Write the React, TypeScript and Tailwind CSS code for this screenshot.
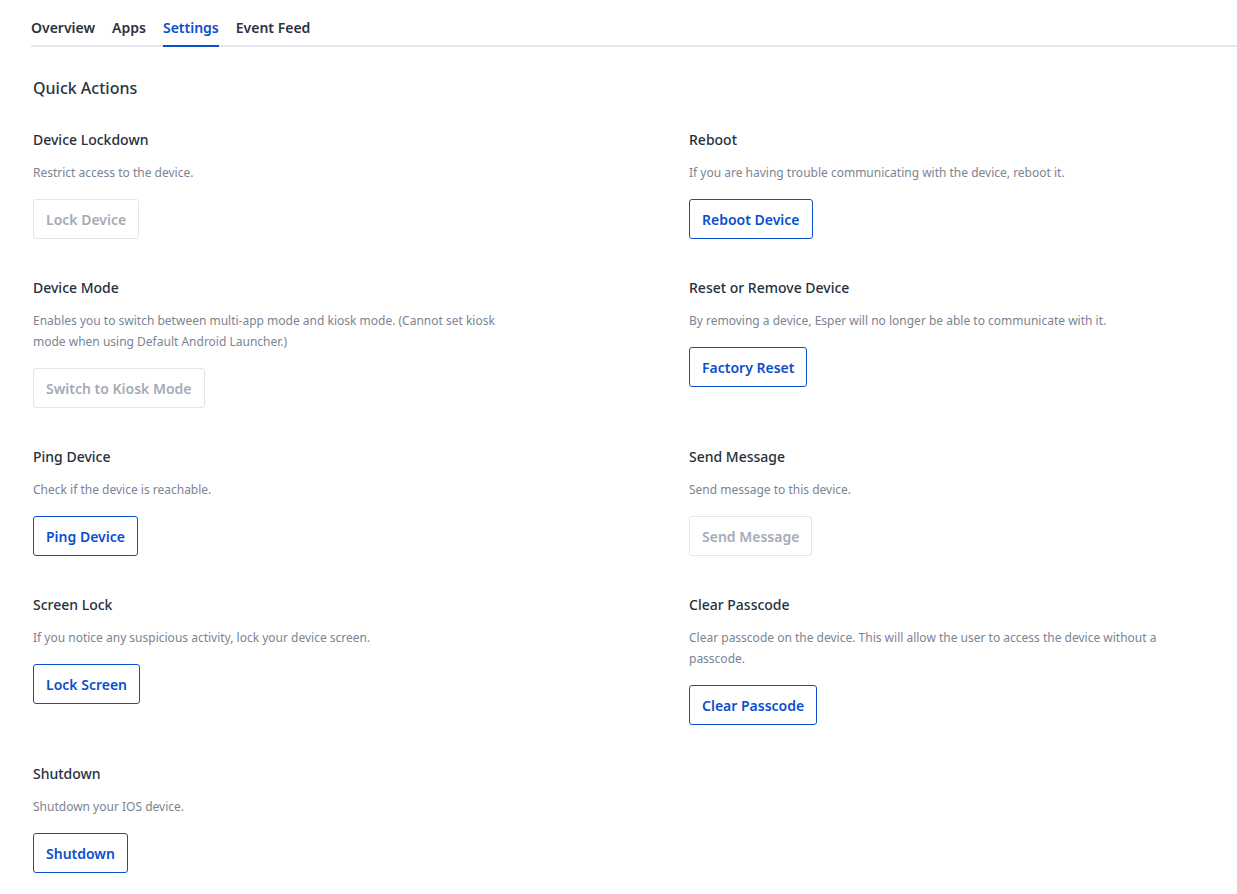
const actions = [
  { title: "Device Lockdown", desc: "Restrict access to the device.", btn: "Lock Device", disabled: true },
  { title: "Reboot", desc: "If you are having trouble communicating with the device, reboot it.", btn: "Reboot Device" },
  { title: "Device Mode", desc: "Enables you to switch between multi-app mode and kiosk mode. (Cannot set kiosk mode when using Default Android Launcher.)", btn: "Switch to Kiosk Mode", disabled: true },
  { title: "Reset or Remove Device", desc: "By removing a device, Esper will no longer be able to communicate with it.", btn: "Factory Reset" },
  { title: "Ping Device", desc: "Check if the device is reachable.", btn: "Ping Device" },
  { title: "Send Message", desc: "Send message to this device.", btn: "Send Message", disabled: true },
  { title: "Screen Lock", desc: "If you notice any suspicious activity, lock your device screen.", btn: "Lock Screen" },
  { title: "Clear Passcode", desc: "Clear passcode on the device. This will allow the user to access the device without a passcode.", btn: "Clear Passcode" },
  { title: "Shutdown", desc: "Shutdown your IOS device.", btn: "Shutdown" },
];

export default function App() {
  const tabs = ["Overview", "Apps", "Settings", "Event Feed"];
  return (
    <div className="min-h-screen bg-white font-['Inter','Liberation_Sans',sans-serif] text-[#2b3340]">
      <div className="ml-[31px] flex gap-[17px] border-b-2 border-[#e5e7eb] pt-[17px]">
        {tabs.map((t) => (
          <div
            key={t}
            className={
              "-mb-[2px] border-b-2 pb-[7px] text-[14px] font-semibold " +
              (t === "Settings" ? "border-[#0a4fce] text-[#0a4fce]" : "border-transparent text-[#2b3340]")
            }
          >
            {t}
          </div>
        ))}
      </div>
      <div className="pl-[33px] pt-[30px]">
        <h2 className="text-[16px] leading-[22px] font-medium">Quick Actions</h2>
        <div className="mt-[31px] grid grid-cols-[656px_540px] gap-y-[39px]">
          {actions.map((a) => (
            <div key={a.title}>
              <div className="text-[14px] leading-[20px] font-medium text-[#26303d]">{a.title}</div>
              <p className="mt-[12px] max-w-[490px] text-[12px] leading-[21px] text-[#7b8493]">{a.desc}</p>
              <button
                className={
                  "mt-[16px] h-[40px] rounded-[3px] border px-[12px] text-[14px] font-semibold " +
                  (a.disabled
                    ? "border-[#e3e5e9] text-[#a4abb6]"
                    : "border-[#0a4fce] text-[#0a4fce]")
                }
              >
                {a.btn}
              </button>
            </div>
          ))}
        </div>
      </div>
    </div>
  );
}
